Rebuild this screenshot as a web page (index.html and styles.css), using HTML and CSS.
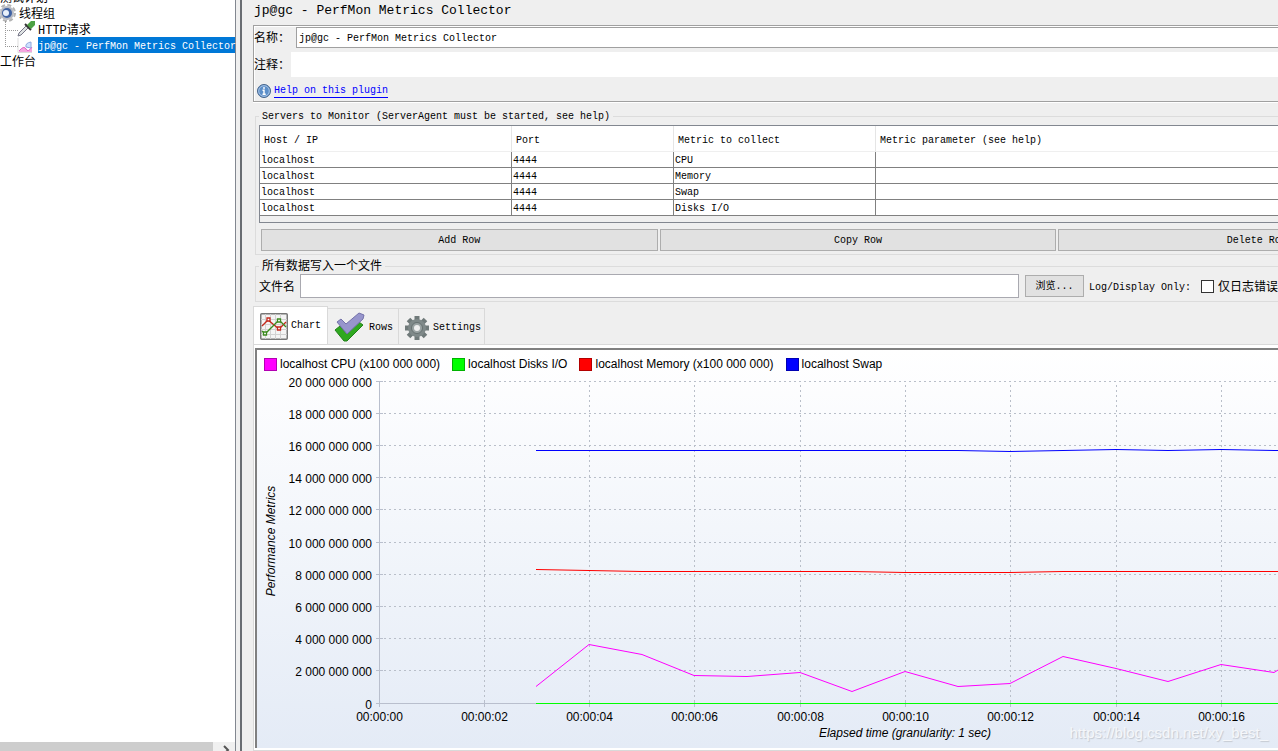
FILE: index.html
```html
<!DOCTYPE html>
<html lang="zh-CN">
<head>
<meta charset="utf-8">
<title>PerfMon Metrics Collector</title>
<link rel="stylesheet" href="styles.css">
</head>
<body>
<div class="app">
  <aside class="sidebar">
    <ul class="tree">
      <li class="node"><span class="caption">测试计划</span></li>
      <li class="node">
        <svg class="gear" width="18" height="18" viewBox="0 0 18 18"><circle cx="7" cy="9" r="8" fill="none" stroke="#b4b4b4" stroke-width="2" stroke-dasharray="4 2.3"/><circle cx="7" cy="9" r="7" fill="#b9bcc4"/><circle cx="7" cy="9" r="5" fill="#3f62a3"/><circle cx="6" cy="9" r="3" fill="#e8f0fb"/></svg>
        <span class="caption">线程组</span></li>
      <li class="node child">
        <svg width="21" height="18" viewBox="0 0 21 18"><path d="M1 16l1-3 8-8 2 2-8 8z" fill="#dfe3e3" stroke="#778"/><path d="M8 4l6 6" stroke="#333" stroke-width="2"/><path d="M10 5l4-4h4v4l-4 4z" fill="#4da143"/></svg>
        <span class="caption">HTTP请求</span></li>
      <li class="node child">
        <svg width="21" height="16" viewBox="0 0 21 16"><path d="M1 1v14.500h14" fill="none" stroke="#ddd"/><path d="M2 14q5-6 7-2t6-2v5H2z" fill="#f3a8df"/><path d="M2 14q5-6 7-2t6-2" fill="none" stroke="#e25ac4"/><path d="M9 10q-1-4 5-5v6z" fill="#cfe0ff" stroke="#8ea8dd"/></svg>
        <span class="caption selected">jp@gc - PerfMon Metrics Collector</span></li>
      <li class="node"><span class="caption">工作台</span></li>
    </ul>
    <div class="scrollbar"><div class="thumb"></div>
      <svg width="22" height="9" viewBox="0 0 22 9"><path d="M11 4l4 4-4 4" fill="none" stroke="#555" stroke-width="2"/></svg>
    </div>
  </aside>
  <div class="divider"></div>
  <main class="main">
    <div class="workspace">
      <h1 class="title">jp@gc - PerfMon Metrics Collector</h1>
      <section class="info">
        <div class="info-row"><label for="name">名称：</label><input class="name" id="name" type="text" value="jp@gc - PerfMon Metrics Collector"></div>
        <div class="info-row"><label for="comment">注释：</label><input class="comment" id="comment" type="text"></div>
        <div class="help">
          <svg width="14" height="14" viewBox="0 0 14 14"><circle cx="7" cy="7" r="6.5" fill="#5d8fc9" stroke="#46658c"/><circle cx="7" cy="7" r="5.3" fill="none" stroke="#a9c5e6"/><path d="M7 3v2M5.5 6.3H7V10M5.5 10.3h3.2" fill="none" stroke="#fff" stroke-width="1.4"/></svg>
          <a href="#">Help on this plugin</a>
        </div>
      </section>
      <fieldset class="group servers">
        <legend>Servers to Monitor (ServerAgent must be started, see help)</legend>
        <div class="table-pane">
          <table>
            <colgroup><col class="c-host"><col class="c-port"><col class="c-metric"><col></colgroup>
            <thead><tr><th>Host / IP</th><th>Port</th><th>Metric to collect</th><th>Metric parameter (see help)</th></tr></thead>
            <tbody>
              <tr><td>localhost</td><td>4444</td><td>CPU</td><td></td></tr>
              <tr><td>localhost</td><td>4444</td><td>Memory</td><td></td></tr>
              <tr><td>localhost</td><td>4444</td><td>Swap</td><td></td></tr>
              <tr><td>localhost</td><td>4444</td><td>Disks I/O</td><td></td></tr>
            </tbody>
          </table>
        </div>
        <div class="buttons"><button>Add Row</button><button>Copy Row</button><button>Delete Row</button></div>
      </fieldset>
      <fieldset class="group file">
        <legend>所有数据写入一个文件</legend>
        <div class="file-row">
          <label for="file">文件名</label><input id="file" type="text">
          <button>浏览...</button>
          <div class="options"><span>Log/Display Only:</span><input id="errors" type="checkbox"><label for="errors">仅日志错误</label></div>
        </div>
      </fieldset>
      <div class="tabs">
        <button class="tab active">
          <svg width="28" height="27" viewBox="0 0 28 27"><rect x=".75" y=".75" width="26.500" height="25.500" rx="1" fill="#f4f4f4" stroke="#777" stroke-width="1.500"/><path d="M5.500 1v25M10.500 1v25M15.500 1v25M20.500 1v25M1 6.500h26M1 11.500h26M1 16.500h26M1 21.500h26" stroke="#d2d2d2"/><path d="M2 13l6-6 11 9 7-7" fill="none" stroke="#c4281c" stroke-width="1.300"/><path d="M2 18l3 3 14-14 7 7" fill="none" stroke="#3b8a1e" stroke-width="1.300"/><g fill="#fff" stroke-width="1.300"><path d="M7 5h3v3H7zM17.500 14h3v3h-3z" stroke="#c4281c"/><path d="M3.500 19h3v3h-3zM17.500 6h3v3h-3z" stroke="#3b8a1e"/></g></svg>
          Chart</button>
        <button class="tab rows">
          <svg width="31" height="31" viewBox="0 0 31 31"><path d="M1 18l5-4 5 6L25 10l4 3-16 16h-3z" fill="#2fa81f" stroke="#23801a"/><path d="M3 10l4-3 5 5L25 1l5 2-1 4-16 15z" fill="#9795cc" stroke="#7472aa"/></svg>
          Rows</button>
        <button class="tab settings">
          <svg width="24" height="24" viewBox="0 0 24 24"><g stroke="#707a7a" stroke-width="5"><path d="M12 0v24M0 12h24M3.500 3.500l17 17M20.500 3.500l-17 17"/></g><circle cx="12" cy="12" r="9" fill="#7f8989"/><circle cx="12" cy="12" r="5.500" fill="#9aa3a3" stroke="#667070"/><circle cx="12" cy="12" r="3" fill="#efefef"/></svg>
          Settings</button>
      </div>
      <section class="tab-body">
        <div class="chart">
          <div class="legend">
            <span class="key cpu">localhost CPU (x100 000 000)</span><span class="key disks">localhost Disks I/O</span><span class="key memory">localhost Memory (x100 000 000)</span><span class="key swap">localhost Swap</span>
          </div>
          <svg class="plot" id="plot"></svg>
        </div>
      </section>
    </div>
    <div class="watermark">https://blog.csdn.net/xy_best_</div>
  </main>
</div>
<script src="chart.js"></script>
</body>
</html>
```
FILE: chart.js
```js
const plot = document.getElementById('plot');
const left = 122, ceiling = 9, bottom = 331, step = 52.65;

function add(tag, attrs, text) {
  const el = document.createElementNS('http://www.w3.org/2000/svg', tag);
  for (const k in attrs) el.setAttribute(k, attrs[k]);
  if (text) el.textContent = text;
  plot.appendChild(el);
}

for (let i = 0; i <= 10; i++) {
  const y = Math.floor(ceiling + (10 - i) * (bottom - ceiling) / 10) + 0.5;
  if (i) add('line', { x1: left, y1: y, x2: 1200, y2: y, class: 'grid' });
  add('line', { x1: left - 3, y1: y, x2: left + 4, y2: y, class: 'axis' });
  const label = i ? 2 * i + ' 000 000 000' : '0';
  add('text', { x: left - 7, y: y + 5.5, class: 'y-label' }, label);
}
for (let s = 0; s <= 16; s += 2) {
  const x = Math.floor(left + s * step) + 0.5;
  if (s) add('line', { x1: x, y1: ceiling + 4, x2: x, y2: bottom, class: 'grid' });
  add('line', { x1: x, y1: bottom - 2, x2: x, y2: bottom + 4, class: 'axis' });
  add('text', { x: x, y: bottom + 18, class: 'x-label' }, '00:00:' + String(s).padStart(2, '0'));
}
add('line', { x1: left + 0.5, y1: ceiling, x2: left + 0.5, y2: bottom, class: 'axis' });
add('line', { x1: left, y1: bottom + 0.5, x2: 1200, y2: bottom + 0.5, class: 'axis' });

function series(cls, ys) {
  const pts = ys.map((y, i) => Math.floor(left + (i + 3) * step) + ',' + (y - 372 + 0.5));
  add('polyline', { points: pts.join(' '), class: 'series ' + cls });
}
series('cpu', [686, 644, 654, 675, 676, 672, 691, 671, 686, 683, 656, 668, 681, 664, 672, 640]);
series('memory', [569, 570, 571, 571, 571, 571, 571, 572, 572, 572, 571, 571, 571, 571, 571, 571]);
series('swap', [450, 450, 450, 450, 450, 450, 450, 450, 450, 451, 450, 449, 450, 449, 450, 450]);
series('disks', Array(16).fill(703));

add('text', { transform: 'translate(18 169) rotate(-90)', class: 'axis-title' }, 'Performance Metrics');
add('text', { x: 648, y: 365, class: 'axis-title' }, 'Elapsed time (granularity: 1 sec)');
```
FILE: styles.css
```css
* { box-sizing: border-box; }
body {
  margin: 0;
  background: #efefef;
  color: #000;
  font: 10px/16px "Liberation Mono", "Noto Sans CJK SC", monospace;
}
input, button { font: inherit; color: inherit; margin: 0; border-radius: 0; }
button { cursor: pointer; }
.app { display: flex; height: 100vh; overflow: hidden; }

.sidebar {
  flex: 0 0 236px;
  min-width: 0;
  display: flex;
  flex-direction: column;
  background: #fff;
  border-right: 1px solid #828790;
}
.tree {
  flex: 1;
  list-style: none;
  margin: -11px 0 0;
  padding: 0;
}
.node { display: flex; align-items: center; height: 16px; white-space: nowrap; }
.node svg { flex: none; }
.gear { margin-right: 1px; }
.child { padding-left: 17px; position: relative; }
.child::before {
  content: "";
  position: absolute;
  left: 5px;
  top: 0;
  width: 12px;
  height: 9px;
  border-left: 1px dotted #999;
  border-bottom: 1px dotted #999;
}
.child + .child::before { top: -7px; height: 16px; }
.caption { flex: 1; min-width: 0; height: 16px; padding-top: 4px; font-size: 12px; line-height: 12px; }
.caption.selected { background: #0078d7; color: #fff; font-size: 10px; }
.scrollbar { display: flex; height: 9px; background: #f0f0f0; }
.thumb { flex: 1; background: #cdcdcd; }

.divider {
  flex: 0 0 7px;
  border-left: 4px solid #efefef;
  border-right: 1px solid #efefef;
  background: #696d72;
}
.main { flex: 1; min-width: 0; overflow: hidden; position: relative; }
.workspace {
  display: flex;
  flex-direction: column;
  width: calc(100% + 183px);
  height: 100%;
  padding-left: 10px;
}
.title { margin: 0; height: 25px; font-size: 13px; line-height: 22px; font-weight: normal; padding-left: 1px; }

.info {
  display: flex;
  flex-direction: column;
  gap: 4px;
  border: 1px solid #a0a0a0;
  border-right: 0;
  box-shadow: inset 1px 1px #fff, 0 1px #fff;
  padding: 1px 0 2px;
  height: 77px;
}
.info-row { display: flex; align-items: center; }
.info-row label { font-size: 12px; width: 37px; padding-top: 2px; white-space: nowrap; }
.info-row input { flex: 1; outline: 0; }
.name { height: 21px; border: 1px solid #a0a0a0; margin-left: 5px; padding: 2px 2px 0; background: #fff; }
.comment { height: 25px; border: 0; background: #fff; }
.help { display: flex; align-items: center; gap: 3px; padding: 2px 0 0 3px; height: 20px; }
.help a { color: #00f; text-decoration: none; border-bottom: 1px solid #00f; line-height: 13px; }

.group { margin: 0 0 0 2px; min-width: 0; border: 1px solid #dcdcdc; }
.group legend { padding: 2px 3px 0; line-height: 14px; }
.servers { margin-top: 6px; padding: 1px 3px 4px; height: 147px; }
.table-pane { border: 1px solid #828790; height: 98px; background: #efefef; }
table { width: 100%; table-layout: fixed; border-collapse: separate; border-spacing: 0; background: #fff; }
.c-host { width: 252px; }
.c-port { width: 162px; }
.c-metric { width: 202px; }
th {
  height: 26px;
  padding: 4px 4px 0;
  text-align: left;
  font-weight: normal;
  line-height: 16px;
  border-right: 1px solid #e5e5e5;
  border-bottom: 1px solid #efefef;
}
td {
  height: 16px;
  padding: 2px 1px 0;
  line-height: 13px;
  border-right: 1px solid #808080;
  border-bottom: 1px solid #808080;
}
.buttons { display: flex; gap: 2px; padding: 6px 2px 0; }
.buttons button { flex: 1; }
.group button { height: 22px; border: 1px solid #adadad; background: #e1e1e1; padding: 2px 0 0; }

.file { margin-top: 3px; padding: 0 3px 3px; height: 44px; }
.file legend { font-size: 12px; }
.file-row { display: flex; align-items: center; height: 24px; }
.file-row label { font-size: 12px; padding-top: 4px; white-space: nowrap; }
.file-row > input { flex: 1; height: 24px; margin: 0 6px 0 5px; border: 1px solid #a9a9b0; background: #fff; }
.file-row > button { width: 59px; }
.options { display: flex; align-items: center; flex: 0 0 373px; padding-left: 5px; }
.options span { padding-top: 3px; }
.options input {
  appearance: none;
  width: 13px;
  height: 13px;
  margin: 0 4px 0 10px;
  border: 1px solid #333;
  background: #fff;
}

.tabs { display: flex; align-items: flex-end; margin-top: 4px; height: 38px; }
.tab {
  display: flex;
  align-items: center;
  gap: 4px;
  height: 36px;
  padding: 2px 3px 0 6px;
  border: 1px solid #d9d9d9;
  border-left: 0;
  border-bottom: 0;
  background: #f0f0f0;
}
.tab.rows { padding-right: 5px; }
.tab.active { height: 38px; gap: 3px; padding: 1px 6px 0; border-left: 1px solid #d9d9d9; background: #fff; }
.tab-body {
  flex: 1;
  min-height: 0;
  display: flex;
  border: 1px solid #d9d9d9;
  border-right: 0;
  background: #fff;
  padding: 3px 0 2px 1px;
}
.chart {
  flex: 1;
  min-width: 0;
  display: flex;
  flex-direction: column;
  border-top: 2px solid #808080;
  border-left: 2px solid #808080;
  background: linear-gradient(#fff, #e4ebf6);
  font: 12px/14px "Liberation Sans", Arial, sans-serif;
}
.legend { display: flex; gap: 12px; padding: 7px 7px 0; height: 22px; }
.key { display: flex; align-items: center; gap: 3px; white-space: nowrap; height: 14px; }
.key::before { content: ""; box-sizing: border-box; width: 13px; height: 13px; border: 1px solid rgb(0 0 0 / 30%); }
.key.cpu::before { background: #f0f; }
.key.disks::before { background: #0f0; }
.key.memory::before { background: #f00; }
.key.swap::before { background: #00f; }
.plot { flex: 1; min-height: 0; width: 100%; }
.grid { stroke: #b9bfc9; stroke-dasharray: 2 3; }
.axis { stroke: #b9bfcd; }
.y-label { text-anchor: end; }
.x-label, .axis-title { text-anchor: middle; }
.axis-title { font-style: italic; }
.series { fill: none; stroke-width: 1; }
.series.cpu { stroke: #f0f; }
.series.disks { stroke: #0f0; }
.series.memory { stroke: #f00; }
.series.swap { stroke: #00f; }
.watermark {
  position: absolute;
  right: 10px;
  bottom: 9px;
  font: 15px/18px "Liberation Sans", Arial, sans-serif;
  color: #f5f7fa;
  text-shadow: 1px 1px 1px #c3c8d0;
}
```
